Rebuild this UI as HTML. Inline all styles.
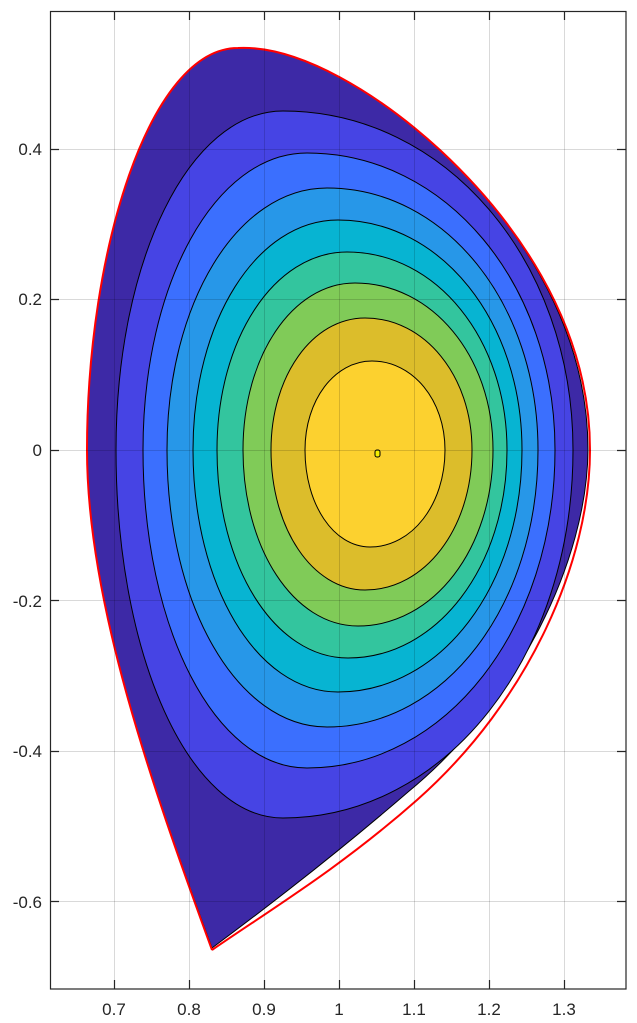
<!DOCTYPE html>
<html><head><meta charset="utf-8"><style>
html,body{margin:0;padding:0;background:#fff;}
svg{display:block;}
text{font-family:"Liberation Sans",sans-serif;font-size:17px;fill:#262626;}
</style></head><body>
<svg width="637" height="1023" viewBox="0 0 637 1023" xmlns="http://www.w3.org/2000/svg">
<defs>
<clipPath id="ax"><rect x="50" y="11" width="576" height="978"/></clipPath>
</defs>
<g clip-path="url(#ax)">
<path d="M212 948 C150 780 87 600 87 450 C87 250 150 48 238 48 C300 45 380 95 440 150 C510 215 588 320 588 450 C587 560 520 700 408 792 C335 855 270 905 212 948 Z" fill="#3d29a6" stroke="#000" stroke-width="1"/>
<path id="c2" fill="#4644e4" stroke="#000" stroke-width="1"/>
<path id="c3" fill="#3b6ffe" stroke="#000" stroke-width="1"/>
<path id="c4" fill="#2797e8" stroke="#000" stroke-width="1"/>
<path id="c5" fill="#07b4d2" stroke="#000" stroke-width="1"/>
<path id="c6" fill="#33c59e" stroke="#000" stroke-width="1"/>
<path id="c7" fill="#80cb58" stroke="#000" stroke-width="1"/>
<path id="c8" fill="#dcbd2b" stroke="#000" stroke-width="1"/>
<path id="c9" fill="#fcd12f" stroke="#000" stroke-width="1"/>
<rect x="375" y="450" width="5" height="7" rx="2" fill="#f5f000" stroke="#000" stroke-width="1"/>
<path d="M212 950 C150 780 87 600 87 450 C87 250 150 48 238 48 C300 45 380 95 440 150 C510 215 590 320 590 450 C590 560 530 700 417 800 C340 868 270 910 212 950" fill="none" stroke="#ff0000" stroke-width="2"/>
<g stroke="#000" stroke-opacity="0.15" stroke-width="1">
<line x1="114.5" y1="11" x2="114.5" y2="989"/><line x1="189.5" y1="11" x2="189.5" y2="989"/>
<line x1="264.5" y1="11" x2="264.5" y2="989"/><line x1="339.5" y1="11" x2="339.5" y2="989"/>
<line x1="414.5" y1="11" x2="414.5" y2="989"/><line x1="489.5" y1="11" x2="489.5" y2="989"/>
<line x1="564.5" y1="11" x2="564.5" y2="989"/>
<line x1="50" y1="149.5" x2="626" y2="149.5"/><line x1="50" y1="299.5" x2="626" y2="299.5"/>
<line x1="50" y1="450.5" x2="626" y2="450.5"/><line x1="50" y1="600.5" x2="626" y2="600.5"/>
<line x1="50" y1="751.5" x2="626" y2="751.5"/><line x1="50" y1="901.5" x2="626" y2="901.5"/>
</g>
</g>
<g stroke="#262626" stroke-width="1.2" fill="none">
<rect x="50.5" y="11.5" width="575.5" height="977.5"/>
<path d="M114.5 989v-9M189.5 989v-9M264.5 989v-9M339.5 989v-9M414.5 989v-9M489.5 989v-9M564.5 989v-9
M114.5 11v9M189.5 11v9M264.5 11v9M339.5 11v9M414.5 11v9M489.5 11v9M564.5 11v9
M50 149.5h9M50 299.5h9M50 450.5h9M50 600.5h9M50 751.5h9M50 901.5h9
M626 149.5h-9M626 299.5h-9M626 450.5h-9M626 600.5h-9M626 751.5h-9M626 901.5h-9"/>
</g>
<g text-anchor="end">
<text x="42" y="155">0.4</text><text x="42" y="305">0.2</text><text x="42" y="456">0</text>
<text x="42" y="607">-0.2</text><text x="42" y="757">-0.4</text><text x="42" y="908">-0.6</text>
</g>
<g text-anchor="middle">
<text x="114" y="1015">0.7</text><text x="189" y="1015">0.8</text><text x="264" y="1015">0.9</text>
<text x="339" y="1015">1</text><text x="414" y="1015">1.1</text><text x="489" y="1015">1.2</text>
<text x="564" y="1015">1.3</text>
</g>
</svg>
<script>
var lv={c2:[116,573,111,283,818,283],c3:[143,555,153,307,768,307],c4:[167,538,188,327,727,327],
c5:[193,522,220,338,692,338],c6:[217,507,252,347,658,348],c7:[243,493,283,355,626,358],
c8:[271,472,318,365,590,365],c9:[305,445,361,372,547,370]};
var k=0.56;
for(var id in lv){var d=lv[id],L=d[0],R=d[1],T=d[2],xt=d[3],B=d[4],xb=d[5],y=450;
var p="M"+L+" "+y+" C"+L+" "+(y-k*(y-T))+" "+(xt-k*(xt-L))+" "+T+" "+xt+" "+T+
" C"+(xt+k*(R-xt))+" "+T+" "+R+" "+(y-k*(y-T))+" "+R+" "+y+
" C"+R+" "+(y+k*(B-y))+" "+(xb+k*(R-xb))+" "+B+" "+xb+" "+B+
" C"+(xb-k*(xb-L))+" "+B+" "+L+" "+(y+k*(B-y))+" "+L+" "+y+" Z";
document.getElementById(id).setAttribute("d",p);}
</script>
</body></html>
